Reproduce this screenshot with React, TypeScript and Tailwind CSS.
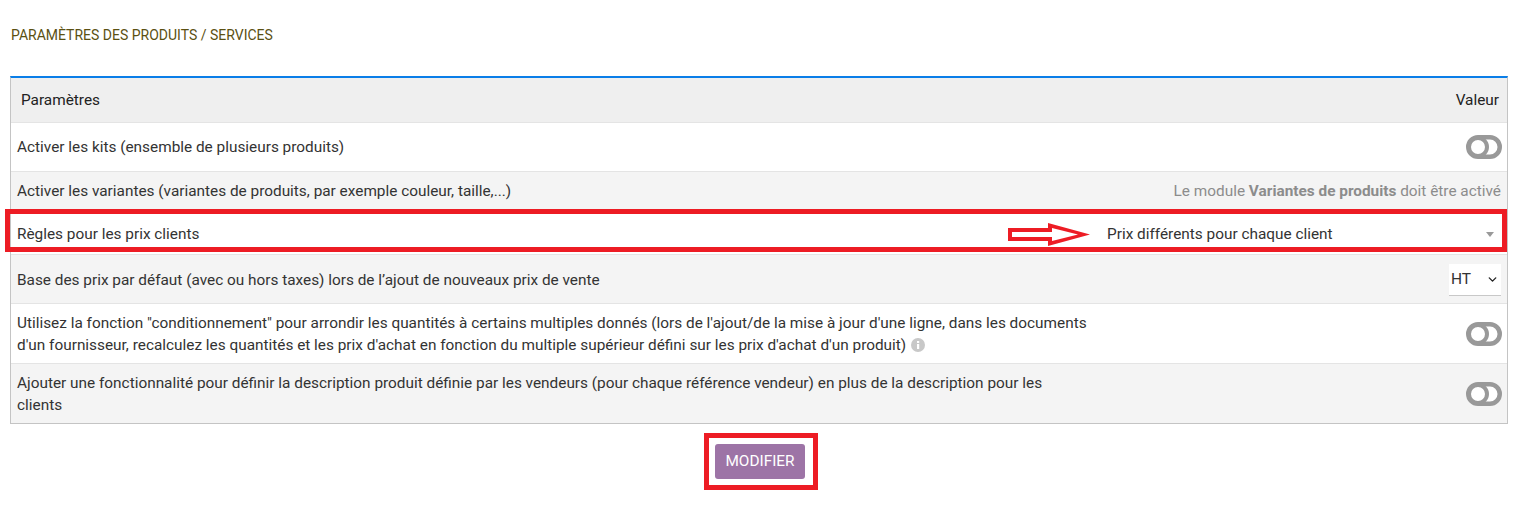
import type { ReactNode } from "react";
import { ChevronDown } from "lucide-react";

function Toggle() {
  return (
    <svg width="36" height="24" viewBox="0 0 36 24" className="shrink-0 mr-[-1px]">
      <rect x="2.25" y="2.25" width="31.5" height="19.5" rx="9.75" fill="white" stroke="#999999" strokeWidth="4.5" />
      <circle cx="12" cy="12" r="9" fill="white" stroke="#999999" strokeWidth="4" />
    </svg>
  );
}

function Row({ className, children }: { className: string; children: ReactNode }) {
  return (
    <div className={`flex items-center justify-between border-b border-[#e4e4e4] pl-[6px] pr-[6px] ${className}`}>
      {children}
    </div>
  );
}

export default function App() {
  return (
    <div className="w-[1530px] h-[509px] bg-white font-['Roboto',sans-serif] text-[15.36px] text-[#333333] overflow-hidden">
      <div className="pt-[27px] pl-[11px] h-[76px] text-[14px] leading-[16px] text-[#5b5012]">
        PARAMÈTRES DES PRODUITS / SERVICES
      </div>

      <div className="relative ml-[10px] w-[1498px] border-x border-b border-[#c4c4c4] border-t-2 border-t-[#0a7ee8]">
        <div className="flex items-center justify-between h-[45px] bg-[#efefef] border-b border-[#e4e4e4] pl-[10px] pr-[8px] text-[#222222]">
          <span className="pt-[2px]">Paramètres</span>
          <span className="pt-[2px]">Valeur</span>
        </div>

        <Row className="h-[49px] bg-white">
          <span className="pt-[2px]">Activer les kits (ensemble de plusieurs produits)</span>
          <Toggle />
        </Row>

        <Row className="h-[38px] bg-[#f4f4f4]">
          <span className="pt-[2px]">Activer les variantes (variantes de produits, par exemple couleur, taille,...)</span>
          <span className="pt-[2px] text-[#8c8c8c]">
            Le module <b className="font-bold">Variantes de produits</b> doit être activé
          </span>
        </Row>

        <Row className="h-[45px] bg-white">
          <span className="pt-[6px]">Règles pour les prix clients</span>
          <div className="flex items-center self-stretch">
            <svg width="84" height="26" viewBox="0 0 84 26" className="mt-[4px] mr-[10px]">
              <path d="M1 7H41V2L83 13.5L41 25V20H1Z" fill="#ed1c24" />
              <path d="M5 11H45V7L71 13.5L45 20V16H5Z" fill="white" />
            </svg>
            <div className="flex items-center justify-between w-[395px] h-[33px] mt-[6px] mr-[5px] border-b border-[#c8c8c8] pl-[6px] pr-[2px]">
              <span>Prix différents pour chaque client</span>
              <span className="w-0 h-0 border-x-[4px] border-x-transparent border-t-[5px] border-t-[#999999]" />
            </div>
          </div>
        </Row>

        <Row className="h-[49px] bg-[#f4f4f4]">
          <span className="pt-[3px]">Base des prix par défaut (avec ou hors taxes) lors de l’ajout de nouveaux prix de vente</span>
          <div className="flex items-center justify-between w-[52px] h-[32px] mt-[1px] bg-white border-b border-[#c8c8c8] pl-[2px] pr-[2px] text-[15.5px]">
            <span className="pt-[1px]">HT</span>
            <ChevronDown size={13} strokeWidth={2.5} className="text-[#222222]" />
          </div>
        </Row>

        <Row className="h-[60px] bg-white">
          <span className="w-[1080px] leading-[22px]">
            Utilisez la fonction "conditionnement" pour arrondir les quantités à certains multiples donnés (lors de l'ajout/de la mise à jour d'une ligne, dans les documents d'un fournisseur, recalculez les quantités et les prix d'achat en fonction du multiple supérieur défini sur les prix d'achat d'un produit){" "}
            <svg width="14" height="14" viewBox="0 0 14 14" className="inline ml-[1px] mb-[1px]">
              <circle cx="7" cy="7" r="7" fill="#c8c8c8" />
              <rect x="6" y="6" width="2.2" height="5" fill="white" />
              <rect x="6" y="3" width="2.2" height="2" fill="white" />
            </svg>
          </span>
          <Toggle />
        </Row>

        <Row className="h-[59px] bg-[#f4f4f4] border-b-0">
          <span className="w-[1040px] leading-[22px]">
            Ajouter une fonctionnalité pour définir la description produit définie par les vendeurs (pour chaque référence vendeur) en plus de la description pour les clients
          </span>
          <Toggle />
        </Row>

        {/* annotation rouge autour de la ligne */}
        <div className="absolute left-[-6px] top-[131px] w-[1502px] h-[43px] border-[5px] border-[#ed1c24] pointer-events-none" />
      </div>

      <div className="flex justify-center mt-[9px]">
        <div className="border-[5px] border-[#ed1c24] pl-[6px] pr-[8px] py-[6px] ml-[-8px]">
          <button className="block w-[90px] h-[35px] rounded-[3px] bg-[#9d74a6] text-white text-[15.36px]">
            MODIFIER
          </button>
        </div>
      </div>
    </div>
  );
}
